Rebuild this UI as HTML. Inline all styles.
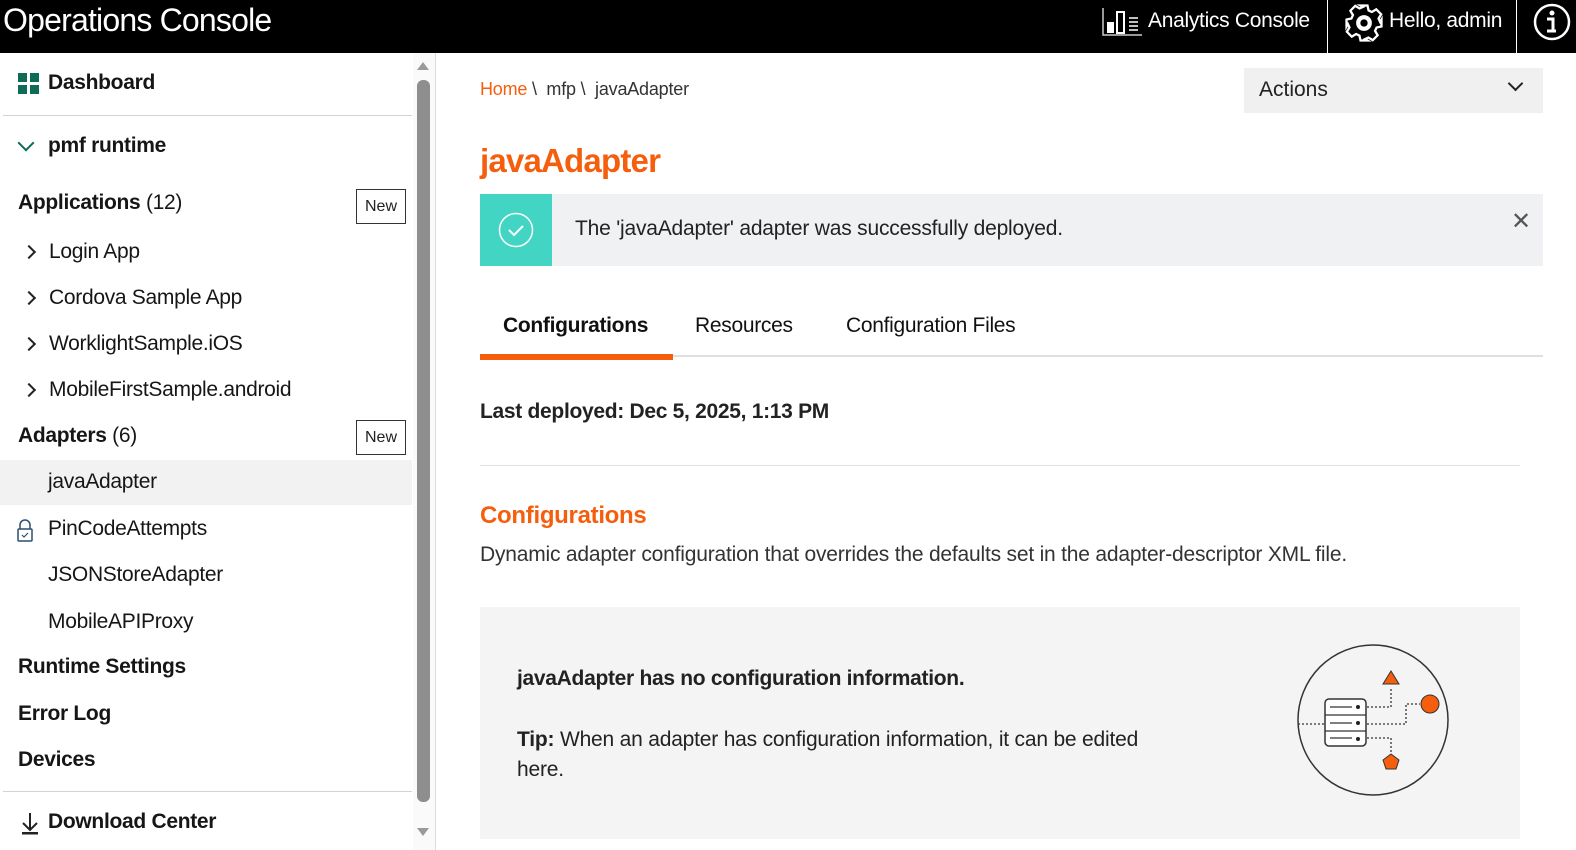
<!DOCTYPE html>
<html style="overflow:hidden;width:1576px;height:850px"><head><meta charset="utf-8"><style>
*{margin:0;padding:0;box-sizing:border-box}
body{width:1576px;height:850px;overflow:hidden;background:#fff;font-family:"Liberation Sans",sans-serif;color:#161616;position:relative}
#w{position:absolute;left:0;top:0;width:1576px;height:850px;overflow:hidden}
.a{position:absolute;white-space:nowrap}
.hdr{left:0;top:0;width:1576px;height:53px;background:#000;color:#fff}
.b{font-weight:bold}
.side{font-size:21px;letter-spacing:-0.3px}
.new{position:absolute;left:356px;width:50px;height:35px;border:1px solid #333;font-size:16px;text-align:center;line-height:33px;color:#222}
.chev{position:absolute;left:24px;width:10px;height:10px;border-right:2.5px solid #222;border-top:2.5px solid #222;transform:rotate(45deg)}
</style></head><body><div id="w">
<div class="a hdr">
 <div class="a" style="left:3px;top:2px;font-size:32px;letter-spacing:-0.8px">Operations Console</div>
 <svg class="a" style="left:1102px;top:8px" width="40" height="28" viewBox="0 0 40 28"><path d="M1 0V27H40" stroke="#ccc" stroke-width="1.5" fill="none"/><rect x="5" y="14" width="7" height="11" fill="#fff"/><rect x="15" y="4" width="7" height="21" fill="none" stroke="#fff" stroke-width="2"/><path d="M27 10h9M27 14h9M27 18h9M27 22h9" stroke="#fff" stroke-width="1.5"/></svg>
 <div class="a" style="left:1148px;top:9px;font-size:21px;letter-spacing:-0.3px">Analytics Console</div>
 <div class="a" style="left:1327px;top:0;width:1px;height:53px;background:#fff"></div>
 <svg class="a" style="left:1343px;top:2px" width="42" height="42" viewBox="0 0 24 24"><path fill="none" stroke="#fff" stroke-width="1.3" d="M10 2h4l.6 2.8 1.9.9 2.5-1.5 2.8 2.8-1.5 2.5.9 1.9L22 10v4l-2.8.6-.9 1.9 1.5 2.5-2.8 2.8-2.5-1.5-1.9.9L14 22h-4l-.6-2.8-1.9-.9-2.5 1.5-2.8-2.8 1.5-2.5-.9-1.9L2 14v-4l2.8-.6.9-1.9-1.5-2.5 2.8-2.8 2.5 1.5 1.9-.9z"/><circle cx="12" cy="12" r="3.3" fill="none" stroke="#fff" stroke-width="2.4"/></svg>
 <div class="a" style="left:1389px;top:9px;font-size:21px;letter-spacing:-0.3px">Hello, admin</div>
 <div class="a" style="left:1516px;top:0;width:1px;height:53px;background:#fff"></div>
 <svg class="a" style="left:1532px;top:2px" width="40" height="40" viewBox="0 0 40 40"><circle cx="20" cy="20" r="17" fill="none" stroke="#fff" stroke-width="2.5"/><circle cx="20" cy="11" r="2.5" fill="#fff"/><path d="M15 17h6v12h3M15 29h9" stroke="#fff" stroke-width="3" fill="none"/></svg>
</div>
<svg class="a" style="left:18px;top:73px" width="21" height="21"><rect x="0" y="0" width="9" height="9" fill="#0e6b57"/><rect x="12" y="0" width="9" height="9" fill="#0e6b57"/><rect x="0" y="12" width="9" height="9" fill="#0e6b57"/><rect x="12" y="12" width="9" height="9" fill="#0e6b57"/></svg>
<div class="a side b" style="left:48px;top:71px">Dashboard</div>
<div class="a" style="left:3px;top:115px;width:409px;height:1px;background:#cdd5d5"></div>
<div class="a" style="left:20px;top:137px;width:12px;height:12px;border-right:2.5px solid #0e6b57;border-bottom:2.5px solid #0e6b57;transform:rotate(45deg)"></div>
<div class="a side b" style="left:48px;top:134px">pmf runtime</div>
<div class="a side" style="left:18px;top:191px"><b>Applications</b> (12)</div>
<div class="new" style="top:189px">New</div>
<div class="chev" style="top:247px"></div><div class="a side" style="left:49px;top:240px">Login App</div>
<div class="chev" style="top:293px"></div><div class="a side" style="left:49px;top:286px">Cordova Sample App</div>
<div class="chev" style="top:339px"></div><div class="a side" style="left:49px;top:332px">WorklightSample.iOS</div>
<div class="chev" style="top:385px"></div><div class="a side" style="left:49px;top:378px">MobileFirstSample.android</div>
<div class="a side" style="left:18px;top:424px"><b>Adapters</b> (6)</div>
<div class="new" style="top:420px">New</div>
<div class="a" style="left:0;top:460px;width:412px;height:45px;background:#f2f2f2"></div>
<div class="a side" style="left:48px;top:470px">javaAdapter</div>
<svg class="a" style="left:16px;top:519px" width="18" height="24" viewBox="0 0 18 24"><path d="M4 10V6a5 5 0 0110 0v4" fill="none" stroke="#2d4f6c" stroke-width="1.5"/><rect x="2" y="10" width="14" height="12" rx="1" fill="none" stroke="#2d4f6c" stroke-width="1.5"/><path d="M6 16l2 2 4-4" fill="none" stroke="#2d4f6c" stroke-width="1.2"/></svg>
<div class="a side" style="left:48px;top:517px">PinCodeAttempts</div>
<div class="a side" style="left:48px;top:563px">JSONStoreAdapter</div>
<div class="a side" style="left:48px;top:610px">MobileAPIProxy</div>
<div class="a side b" style="left:18px;top:655px">Runtime Settings</div>
<div class="a side b" style="left:18px;top:702px">Error Log</div>
<div class="a side b" style="left:18px;top:748px">Devices</div>
<div class="a" style="left:3px;top:791px;width:409px;height:1px;background:#cdd5d5"></div>
<svg class="a" style="left:20px;top:812px" width="20" height="24"><path d="M10 1v16M3 11l7 7 7-7" fill="none" stroke="#222" stroke-width="2"/><rect x="2" y="20" width="16" height="2.5" fill="#222"/></svg>
<div class="a side b" style="left:48px;top:810px">Download Center</div>
<div class="a" style="left:413px;top:53px;width:22px;height:797px;background:#fafafa"></div>
<div class="a" style="left:417px;top:62px;width:0;height:0;border-left:6px solid transparent;border-right:6px solid transparent;border-bottom:8px solid #9a9a9a"></div>
<div class="a" style="left:417px;top:80px;width:13px;height:722px;background:#8e8e8e;border-radius:6px"></div>
<div class="a" style="left:417px;top:828px;width:0;height:0;border-left:6px solid transparent;border-right:6px solid transparent;border-top:8px solid #9a9a9a"></div>
<div class="a" style="left:435px;top:53px;width:1px;height:797px;background:#ddd"></div>
<div class="a" style="left:480px;top:79px;font-size:18px;color:#333;letter-spacing:-0.2px"><span style="color:#f55e0c">Home</span> \&nbsp; mfp \&nbsp; javaAdapter</div>
<div class="a" style="left:1244px;top:68px;width:299px;height:45px;background:#f0f0f0"></div>
<div class="a" style="left:1259px;top:78px;font-size:21px;color:#222">Actions</div>
<div class="a" style="left:1510px;top:78px;width:11px;height:11px;border-right:2.5px solid #222;border-bottom:2.5px solid #222;transform:rotate(45deg)"></div>
<div class="a b" style="left:480px;top:142px;font-size:33px;color:#f55e0c;letter-spacing:-0.8px">javaAdapter</div>
<div class="a" style="left:480px;top:194px;width:1063px;height:72px;background:#f0f1f3"></div>
<div class="a" style="left:480px;top:194px;width:72px;height:72px;background:#42d5c3"></div>
<svg class="a" style="left:496px;top:210px" width="40" height="40"><circle cx="20" cy="20" r="16.5" fill="none" stroke="#fff" stroke-width="1.5"/><path d="M13 20l5 5 9-9" fill="none" stroke="#fff" stroke-width="2"/></svg>
<div class="a" style="left:575px;top:217px;font-size:21px;color:#222;letter-spacing:-0.2px">The 'javaAdapter' adapter was successfully deployed.</div>
<div class="a" style="left:1511px;top:207px;font-size:24px;color:#555">✕</div>
<div class="a b" style="left:503px;top:314px;font-size:21px;color:#111;letter-spacing:-0.3px">Configurations</div>
<div class="a" style="left:695px;top:314px;font-size:21px;color:#111;letter-spacing:-0.3px">Resources</div>
<div class="a" style="left:846px;top:314px;font-size:21px;color:#111;letter-spacing:-0.3px">Configuration Files</div>
<div class="a" style="left:480px;top:355px;width:1063px;height:2px;background:#e0e0e0"></div>
<div class="a" style="left:480px;top:354px;width:193px;height:6px;background:#f55e0c"></div>
<div class="a b" style="left:480px;top:400px;font-size:21px;color:#222;letter-spacing:-0.3px">Last deployed: Dec 5, 2025, 1:13 PM</div>
<div class="a" style="left:480px;top:465px;width:1040px;height:1px;background:#e0e0e0"></div>
<div class="a b" style="left:480px;top:502px;font-size:24px;color:#f55e0c;letter-spacing:-0.3px">Configurations</div>
<div class="a" style="left:480px;top:543px;font-size:21px;color:#333;letter-spacing:-0.2px">Dynamic adapter configuration that overrides the defaults set in the adapter-descriptor XML file.</div>
<div class="a" style="left:480px;top:607px;width:1040px;height:232px;background:#f4f4f4"></div>
<div class="a b" style="left:517px;top:667px;font-size:21px;color:#222;letter-spacing:-0.3px">javaAdapter has no configuration information.</div>
<div class="a" style="left:517px;top:725px;font-size:21px;color:#222;letter-spacing:-0.2px;line-height:30px"><b>Tip:</b> When an adapter has configuration information, it can be edited<br>here.</div>
<svg class="a" style="left:1280px;top:630px" width="180" height="180" viewBox="0 0 180 180">
<circle cx="93" cy="90" r="75" fill="none" stroke="#333" stroke-width="1.5"/>
<g stroke="#333" stroke-width="1.3" stroke-dasharray="2 2" fill="none"><path d="M18 94H45M87 77h24V58M87 94h39V74h14M87 108h24v20"/></g>
<rect x="45" y="69" width="41" height="47" rx="4" fill="#fff" stroke="#333" stroke-width="1.5"/>
<path d="M45 85h41M45 101h41M50 77h22M50 93h22M50 108h22" stroke="#333" stroke-width="1.3"/>
<circle cx="78" cy="77" r="2" fill="#222"/><circle cx="78" cy="93" r="2" fill="#222"/><circle cx="78" cy="109" r="2" fill="#222"/>
<path d="M111 41l8 13h-16z" fill="#f55e0c" stroke="#333"/>
<circle cx="150" cy="74" r="9" fill="#f55e0c" stroke="#333"/>
<path d="M111 124l8 6-3 9h-10l-3-9z" fill="#f55e0c" stroke="#333"/>
</svg>
</div></body></html>
